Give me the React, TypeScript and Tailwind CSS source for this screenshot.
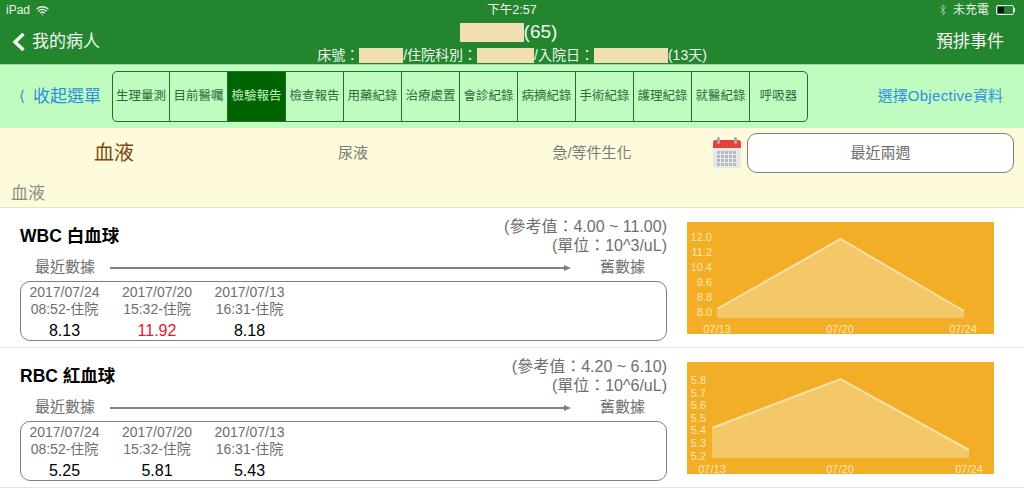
import React from 'react';
import { Wifi, Bluetooth } from 'lucide-react';

const TABS = ['生理量測', '目前醫囑', '檢驗報告', '檢查報告', '用藥紀錄', '治療處置', '會診紀錄', '病摘紀錄', '手術紀錄', '護理紀錄', '就醫紀錄', '呼吸器'];

interface Reading {
  date: string;
  time: string;
  value: string;
  high?: boolean;
}

interface ChartProps {
  yLabels: string[];
  labelX: number;
  labelYs: number[];
  points: string;
  line: string;
  xLabels: number[];
}

const Redact: React.FC<{ w: string }> = ({ w }) => <span className={`inline-block h-[15px] bg-[#f0dfb0] ${w}`} />;

const Chart: React.FC<ChartProps> = ({ yLabels, labelX, labelYs, points, line, xLabels }) => (
  <svg width="307" height="112" viewBox="0 0 307 112" className="mt-[7px] shrink-0">
    <rect width="307" height="112" fill="#f2ae27" />
    <polygon points={points} fill="#f4c768" />
    <polyline points={line} fill="none" stroke="#f9e0a8" strokeWidth="2" />
    {yLabels.map((t, i) => (
      <text key={t} x={labelX} y={labelYs[i]} textAnchor="end" fontSize="11" fill="#fbe6b4">{t}</text>
    ))}
    {['07/13', '07/20', '07/24'].map((t, i) => (
      <text key={t} x={xLabels[i]} y="111" textAnchor="middle" fontSize="11" fill="#fbe6b4">{t}</text>
    ))}
  </svg>
);

const LabRow: React.FC<{ title: string; ref1: string; ref2: string; readings: Reading[]; chart: ChartProps }> = ({ title, ref1, ref2, readings, chart }) => (
  <div className="flex h-[140px] gap-5 border-b border-[#e4e4e4] bg-white pl-5 pt-[7px]">
    <div className="flex w-[647px] shrink-0 flex-col">
      <div className="flex h-[39px] items-start justify-between">
        <div className="pt-[9px] text-[17.5px] leading-6 font-bold text-black">{title}</div>
        <div className="pt-[2px] text-right text-[16px] leading-[19px] text-[#6e6e6e]">
          <div>{ref1}</div>
          <div>{ref2}</div>
        </div>
      </div>
      <div className="flex h-[27px] items-center pl-[15px] text-[15px] text-[#6e6e6e]">
        <span className="w-[75px]">最近數據</span>
        <div className="flex w-[461px] items-center">
          <div className="h-[2px] flex-1 bg-[#808080]" />
          <div className="h-0 w-0 border-y-[3px] border-l-[7px] border-y-transparent border-l-[#808080]" />
        </div>
        <span className="ml-[29px]">舊數據</span>
      </div>
      <div className="flex h-[60px] gap-[5.5px] rounded-[10px] border border-[#808080] pt-[2px]">
        {readings.map((r) => (
          <div key={r.date} className="flex w-[87px] flex-col items-center">
            <div className="text-[14px] leading-[17px] whitespace-nowrap text-[#6e6e6e]">{r.date}</div>
            <div className="text-[14px] leading-[17px] whitespace-nowrap text-[#6e6e6e]">{r.time}</div>
            <div className={`mt-[3px] text-[16px] leading-[19px] ${r.high ? 'text-[#e0202a]' : 'text-black'}`}>{r.value}</div>
          </div>
        ))}
      </div>
    </div>
    <Chart {...chart} />
  </div>
);

const CalendarIcon = () => (
  <svg width="28" height="32" viewBox="0 0 28 32" className="shrink-0">
    <rect x="0" y="3" width="28" height="28" rx="3" fill="#e6e8ea" />
    <path d="M0 11V6a3 3 0 0 1 3-3h22a3 3 0 0 1 3 3v5z" fill="#e5413c" />
    <rect x="4" y="0" width="3" height="7" rx="1.5" fill="#b0a8a4" />
    <rect x="21" y="0" width="3" height="7" rx="1.5" fill="#b0a8a4" />
    {[14, 18, 22, 26].map((y) =>
      [4, 8, 12, 16, 20].map((x) => <rect key={`${x}-${y}`} x={x} y={y} width="3" height="3" fill="#b4bac2" />)
    )}
  </svg>
);

const App: React.FC = () => (
  <div className="h-[490px] w-[1024px] overflow-hidden bg-white font-['Liberation_Sans','Noto_Sans_CJK_TC',sans-serif]">
    {/* status + nav */}
    <div className="h-[64px] bg-[#23862f] text-[#f2f7f0]">
      <div className="grid h-5 grid-cols-3 items-center px-[6px] text-[12px] text-[#e8f2e6]">
        <div className="flex items-center gap-[6px]">
          iPad <Wifi size={13} strokeWidth={2.5} />
        </div>
        <div className="text-center text-[12.5px] text-[#f5f5f5]">下午2:57</div>
        <div className="flex items-center justify-end gap-1 pr-[3px]">
          <Bluetooth size={12} className="opacity-60" />
          <span>未充電</span>
          <div className="ml-[3px] flex items-center">
            <div className="flex h-[10px] w-[18px] rounded-[2px] border border-[#e8f2e6] p-[1px]">
              <div className="w-[6px] bg-[#111]" />
            </div>
            <div className="h-[4px] w-[1px] bg-[#e8f2e6]" />
          </div>
        </div>
      </div>
      <div className="grid h-11 grid-cols-[300px_1fr_300px]">
        <div className="flex items-center gap-[6px] pl-[12px] text-[17px]">
          <svg width="14" height="20" viewBox="0 0 14 20" className="shrink-0">
            <path d="M11.5 2 L3 10 L11.5 18" fill="none" stroke="#f4f8f2" strokeWidth="3.5" />
          </svg>
          <span>我的病人</span>
        </div>
        <div className="flex flex-col items-center">
          <div className="mr-[7px] flex h-[23px] items-end text-[19px] leading-[22px]">
            <span className="mb-[1px] inline-block h-[19px] w-[64px] bg-[#f0dfb0]" />
            (65)
          </div>
          <div className="mt-[4px] flex items-center whitespace-nowrap text-[14px] leading-4">
            床號：<Redact w="w-[44px]" />/住院科別：<Redact w="w-[57px]" />/入院日：<Redact w="w-[74px]" />(13天)
          </div>
        </div>
        <div className="flex items-center justify-end pr-[20px] text-[17px]">預排事件</div>
      </div>
    </div>

    {/* menu */}
    <div className="flex h-[64px] items-center border-t border-[#9ed89e] bg-[#c0fcc0]">
      <div className="flex w-[112px] items-center pl-[19px] text-[17px] whitespace-nowrap text-[#2f8fe0]">
        <span className="w-[14px] text-[15px]">⟨</span>
        <span>收起選單</span>
      </div>
      <div className="flex h-[51px] w-[696px] overflow-hidden rounded-[5px] border border-[#1f6e2a]">
        {TABS.map((t, i) => (
          <div
            key={t}
            className={`flex h-full items-center justify-center text-[12.5px] whitespace-nowrap ${i === 0 ? 'w-[56px]' : 'w-[58px] border-l border-[#1f6e2a]'} ${i === 2 ? 'bg-[#006400] text-[#c6f5c6]' : 'text-[#2a6b38]'}`}
          >
            {t}
          </div>
        ))}
      </div>
      <div className="flex-1 pr-[21px] text-right text-[15px] whitespace-nowrap text-[#2f8fe0]">
        選擇<span className="tracking-[0.3px]">Objective</span>資料
      </div>
    </div>

    {/* filters */}
    <div className="h-[80px] border-b border-[#e2e2d8] bg-[#fdfbdc]">
      <div className="flex h-[50px] items-center">
        <div className="flex w-[228px] justify-center text-[20px] text-[#7c4a12]">血液</div>
        <div className="flex w-[250px] justify-center text-[15px] text-[#7a7a7a]">尿液</div>
        <div className="flex w-[228px] justify-center text-[15px] text-[#7a7a7a]">急/等件生化</div>
        <div className="ml-[7px]"><CalendarIcon /></div>
        <div className="ml-[6px] flex h-[40px] w-[267px] items-center justify-center rounded-[10px] border border-[#808080] bg-white text-[15px] text-[#6e6e6e]">最近兩週</div>
      </div>
      <div className="mt-[4px] pl-[11px] text-[17px] leading-[24px] text-[#8d8d84]">血液</div>
    </div>

    <LabRow
      title="WBC 白血球"
      ref1="(參考值：4.00 ~ 11.00)"
      ref2="(單位：10^3/uL)"
      readings={[
        { date: '2017/07/24', time: '08:52-住院', value: '8.13' },
        { date: '2017/07/20', time: '15:32-住院', value: '11.92', high: true },
        { date: '2017/07/13', time: '16:31-住院', value: '8.18' },
      ]}
      chart={{
        yLabels: ['12.0', '11.2', '10.4', '9.6', '8.8', '8.0'],
        labelX: 25,
        labelYs: [19, 34, 49, 64, 79, 94],
        points: '30,87 153.5,17 277,89 277,96 30,96',
        line: '30,87 153.5,17 277,89',
        xLabels: [30, 153, 276],
      }}
    />
    <LabRow
      title="RBC 紅血球"
      ref1="(參考值：4.20 ~ 6.10)"
      ref2="(單位：10^6/uL)"
      readings={[
        { date: '2017/07/24', time: '08:52-住院', value: '5.25' },
        { date: '2017/07/20', time: '15:32-住院', value: '5.81' },
        { date: '2017/07/13', time: '16:31-住院', value: '5.43' },
      ]}
      chart={{
        yLabels: ['5.8', '5.7', '5.6', '5.5', '5.4', '5.3', '5.2'],
        labelX: 19,
        labelYs: [22, 35, 47, 60, 72, 85, 98],
        points: '25,66 153.5,17 282,88 282,96 25,96',
        line: '25,66 153.5,17 282,88',
        xLabels: [25, 153, 282],
      }}
    />
  </div>
);

export default App;
